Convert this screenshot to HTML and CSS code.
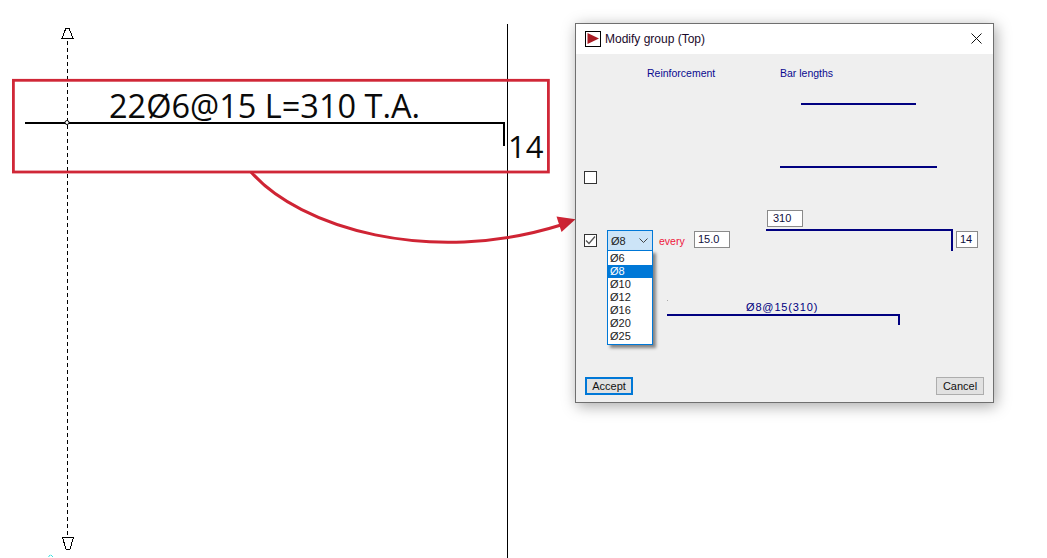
FILE: index.html
```html
<!DOCTYPE html>
<html lang="en">
<head>
<meta charset="utf-8">
<title>Modify group (Top)</title>
<link rel="stylesheet" href="styles.css">
</head>
<body>
<main class="stage">
  <svg class="drawing" width="1047" height="558" viewBox="0 0 1047 558">
    <line class="axis" x1="507.5" y1="24" x2="507.5" y2="558"/>
    <line class="dash" x1="67.5" y1="41" x2="67.5" y2="537"/>
    <path class="thin" d="M66 28 L69 28 L73 38.5 L62 38.5 Z"/>
    <path class="thin" d="M62.5 537.5 L73.5 537.5 L70 549 L66 549 Z"/>
    <path class="bar" d="M25 123 H504 V146"/>
    <circle class="node" cx="67" cy="122.5" r="2"/>
    <text class="cad" x="109" y="118">22Ø6@15 L=310 T.A.</text>
    <text class="cad cad-small" x="508" y="158">14</text>
    <rect class="frame" x="13.4" y="80.3" width="535" height="91.7"/>
    <path class="callout" d="M251 172 C300 228 430 266 561 225"/>
    <path class="head" d="M575.5 219.3 L556.5 216.5 L561.5 232 Z"/>
    <path class="speck" d="M48.5 557 L50 555 L50.5 555 M51 555 L52 556 L53 557"/>
  </svg>

  <section class="dialog">
    <header class="titlebar">
      <span class="appicon"><svg width="16" height="16" viewBox="0 0 16 16"><rect x=".5" y=".5" width="15" height="15" fill="#fff" stroke="#000"/><path d="M2.5 2 L14 7.5 L2.5 13 Z" fill="#a81c24"/></svg></span>
      <h1 class="title">Modify group (Top)</h1>
      <svg class="close" width="11" height="11" viewBox="0 0 11 11"><path d="M.5 .5 L10.5 10.5 M10.5 .5 L.5 10.5" stroke="#111" fill="none"/></svg>
    </header>
    <div class="content">
      <div class="heads"><span>Reinforcement</span><span>Bar lengths</span></div>
      <div class="line line-a"></div>
      <div class="line line-b"></div>
      <div class="check check-empty"></div>
      <div class="field field-length">310</div>
      <div class="editrow">
        <div class="check check-on"><svg width="11" height="11" viewBox="0 0 11 11"><path d="M1 5.5 L4 8.5 L10 1.5" stroke="#555" stroke-width="1.3" fill="none"/></svg></div>
        <div class="combo">
          <span>Ø8</span>
          <svg width="9" height="5" viewBox="0 0 9 5"><path d="M.5 .5 L4.5 4.5 L8.5 .5" stroke="#444" fill="none"/></svg>
          <ul class="list">
            <li>Ø6</li><li class="selected">Ø8</li><li>Ø10</li><li>Ø12</li><li>Ø16</li><li>Ø20</li><li>Ø25</li>
          </ul>
        </div>
        <span class="every">every</span>
        <div class="field field-spacing">15.0</div>
        <div class="hook"></div>
        <div class="field field-hook">14</div>
      </div>
      <div class="label">Ø8@15(310)</div>
      <div class="hook hook-result"></div>
      <footer class="buttons">
        <button class="btn btn-default" type="button">Accept</button>
        <button class="btn" type="button">Cancel</button>
      </footer>
    </div>
  </section>
</main>
</body>
</html>
```
FILE: styles.css
```css
* { box-sizing: border-box; }
html, body { margin: 0; padding: 0; background: #fff; }
.stage {
  position: relative;
  width: 1047px;
  height: 558px;
  overflow: hidden;
  font-family: "Liberation Sans", Arial, sans-serif;
}
.drawing { position: absolute; left: 0; top: 0; }
.axis { stroke: #000; stroke-width: 1; }
.dash { stroke: #000; stroke-width: 1; stroke-dasharray: 4 3; }
.thin { fill: #fff; stroke: #000; stroke-width: 1; shape-rendering: crispEdges; }
.bar { fill: none; stroke: #000; stroke-width: 2; }
.node { fill: #fff; stroke: #000; stroke-width: 1; }
.cad { font-family: "Open Sans", sans-serif; font-size: 32.5px; fill: #0a0a0a; }
.cad-small { font-size: 31px; }
.frame { fill: none; stroke: #d02737; stroke-width: 2.8; }
.callout { fill: none; stroke: #cf2434; stroke-width: 3; }
.head { fill: #cf2434; }
.speck { fill: none; stroke: #40e0e0; stroke-width: 1; }

.dialog {
  position: absolute;
  left: 575px;
  top: 23px;
  width: 419px;
  height: 380px;
  display: flex;
  flex-direction: column;
  background: #efefef;
  border: 1px solid #6f6f6f;
  box-shadow: 2px 3px 14px rgba(0, 0, 0, .35);
}
.titlebar {
  flex: none;
  height: 30px;
  display: flex;
  align-items: center;
  padding: 0 11px 0 9px;
  background: #fff;
}
.appicon { display: flex; width: 16px; height: 16px; }
.title {
  flex: 1;
  margin: 0 0 0 4px;
  font-size: 12px;
  font-weight: 400;
  color: #1a0a2a;
}
.close { flex: none; margin-top: -1px; }

.content {
  flex: 1;
  position: relative;
  display: flex;
  flex-direction: column;
  font-size: 11px;
}
.heads {
  display: grid;
  grid-template-columns: 133px auto;
  padding: 12px 0 0 71px;
  height: 26px;
  line-height: 14px;
  font-size: 10.5px;
  color: #0a0a90;
}
.line { height: 2px; background: #000080; }
.line-a { margin: 23px 0 0 225px; width: 115px; }
.line-b { margin: 61px 0 0 204px; width: 157px; }
.check {
  flex: none;
  display: flex;
  align-items: center;
  justify-content: center;
  width: 13px;
  height: 13px;
  background: #fff;
  border: 1px solid #333;
}
.check-empty { margin: 3px 0 0 8px; }
.field {
  flex: none;
  height: 17px;
  padding-left: 5px;
  line-height: 15px;
  font-size: 11px;
  color: #101040;
  background: #fff;
  border: 1px solid #8a8a8a;
}
.field-length { width: 36px; margin: 26px 0 0 191px; }
.editrow {
  position: relative;
  display: flex;
  align-items: flex-start;
  height: 22px;
  margin-top: 2px;
  padding-left: 8px;
}
.check-on { margin-top: 5px; }
.combo {
  position: relative;
  flex: none;
  display: flex;
  align-items: center;
  justify-content: space-between;
  width: 46px;
  height: 21px;
  margin: 1px 0 0 10px;
  padding: 0 4px 0 3px;
  color: #222;
  background: #cce4f7;
  border: 1px solid #0078d7;
}
.list {
  position: absolute;
  z-index: 2;
  left: -1px;
  top: 19px;
  width: 46px;
  margin: 0;
  padding: 1px 0;
  list-style: none;
  background: #fff;
  border: 1px solid #0078d7;
  box-shadow: 3px 3px 3px rgba(0, 0, 0, .45);
  font-size: 11px;
  line-height: 13px;
  color: #222;
}
.list li { height: 13px; padding-left: 2px; }
.list .selected { color: #fff; background: #0078d7; }
.every { flex: none; width: 35px; margin: 5px 0 0 6px; font-size: 10.5px; line-height: 14px; color: #ee143a; }
.field-spacing { width: 36px; margin-top: 2px; padding-left: 3px; }
.hook {
  flex: none;
  width: 187px;
  height: 22px;
  margin-left: 36px;
  border-top: 2px solid #000080;
  border-right: 2px solid #000080;
}
.field-hook { width: 22px; margin: 2px 0 0 3px; padding-left: 3px; }
.label {
  position: relative;
  height: 14px;
  margin-top: 49px;
  padding-left: 170px;
  line-height: 14px;
  font-size: 11px;
  letter-spacing: .85px;
  color: #000080;
}
.label::before {
  content: "";
  position: absolute;
  left: 91px;
  top: 0;
  width: 1px;
  height: 1px;
  background: #aaa;
}
.hook-result { width: 233px; height: 11px; margin-left: 91px; }
.buttons {
  display: flex;
  justify-content: space-between;
  margin-top: auto;
  padding: 0 9px 7px 9px;
}
.btn {
  width: 48px;
  height: 18px;
  padding: 0;
  font-family: inherit;
  font-size: 11px;
  line-height: 14px;
  color: #111;
  background: #e1e1e1;
  border: 1px solid #adadad;
}
.btn-default { border: 2px solid #0078d7; }
```
